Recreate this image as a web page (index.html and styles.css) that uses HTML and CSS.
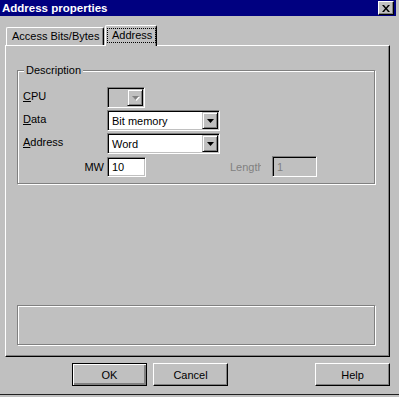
FILE: index.html
```html
<!DOCTYPE html>
<html lang="en">
<head>
    <meta charset="UTF-8">
    <title>Address properties</title>
    <link rel="stylesheet" href="styles.css">
</head>
<body>
    <div class="window">
        <div class="titlebar">
            <span class="title">Address properties</span>
            <button class="close">
                <svg width="8" height="7" viewBox="0 0 8 7"><path d="M0 0h2l2 2.5L6 0h2L5 3.5 8 7H6L4 4.5 2 7H0l3-3.5z"/></svg>
            </button>
        </div>

        <div class="tabs">
            <div class="tab">Access Bits/Bytes</div>
            <div class="tab active"><span class="focus">Address</span></div>
        </div>

        <div class="panel">
            <div class="group">
                <span class="group-title">Description</span>

                <div class="row first">
                    <span class="label"><u>C</u>PU</span>
                    <div class="combo disabled cpu">
                        <span class="value"></span>
                        <span class="drop"><svg width="7" height="4" viewBox="0 0 7 4"><path d="M0 0h7L3.5 4z"/></svg></span>
                    </div>
                </div>

                <div class="row">
                    <span class="label"><u>D</u>ata</span>
                    <div class="combo">
                        <span class="value">Bit memory</span>
                        <span class="drop"><svg width="7" height="4" viewBox="0 0 7 4"><path d="M0 0h7L3.5 4z"/></svg></span>
                    </div>
                </div>

                <div class="row">
                    <span class="label"><u>A</u>ddress</span>
                    <div class="combo">
                        <span class="value">Word</span>
                        <span class="drop"><svg width="7" height="4" viewBox="0 0 7 4"><path d="M0 0h7L3.5 4z"/></svg></span>
                    </div>
                </div>

                <div class="row">
                    <span class="label right">MW</span>
                    <div class="edit mw">10</div>
                    <span class="label-len">Length</span>
                    <div class="edit disabled len">1</div>
                </div>
            </div>

            <div class="group status"></div>
        </div>

        <div class="buttons">
            <button class="button default">OK</button>
            <button class="button">Cancel</button>
            <button class="button help">Help</button>
        </div>
    </div>
</body>
</html>
```

FILE: styles.css
```css
body {
    margin: 0;
    font-family: "Liberation Sans", Arial, sans-serif;
    font-size: 11px;
    color: #000;
    background: #c0c0c0;
}

.window {
    width: 399px;
    height: 395px;
    box-sizing: border-box;
    background: #c0c0c0;
    border-bottom: 1px solid #202020;
    overflow: hidden;
}

.titlebar {
    height: 16px;
    margin-right: 3px;
    background: #000080;
    color: #fff;
    display: flex;
    align-items: center;
    justify-content: space-between;
    padding: 0 2px 0 2px;
}

.title {
    font-weight: bold;
    font-size: 11.5px;
}

.close {
    width: 16px;
    height: 14px;
    padding: 0;
    margin: 0;
    background: #c0c0c0;
    border: 1px solid;
    border-color: #fff #000 #000 #fff;
    box-shadow: inset -1px -1px 0 #808080;
    display: flex;
    align-items: center;
    justify-content: center;
}

/* tabs */
.tabs {
    display: flex;
    align-items: flex-end;
    height: 20px;
    margin-top: 9px;
    padding-left: 6px;
    position: relative;
    z-index: 1;
}

.tab {
    height: 18px;
    box-sizing: border-box;
    width: 98px;
    border-top: 1px solid #fff;
    border-left: 1px solid #fff;
    border-right: 1px solid #000;
    border-radius: 2px 2px 0 0;
    box-shadow: inset -1px 0 0 #808080;
    background: #c0c0c0;
    display: flex;
    align-items: center;
    padding-left: 5px;
    line-height: 13px;
}

.tab.active {
    width: 52px;
    height: 21px;
    margin-left: 1px;
    margin-bottom: -1px;
    padding: 0 0 2px 2px;
}

.focus {
    outline: 1px dotted #000;
    padding: 0 3px 0 4px;
}

/* panel */
.panel {
    width: 385px;
    height: 312px;
    box-sizing: border-box;
    margin-left: 5px;
    border: 1px solid;
    border-color: #fff #000 #000 #fff;
    box-shadow: inset -1px -1px 0 #808080;
    padding: 24px 0 0 11px;
}

.group {
    width: 358px;
    height: 114px;
    box-sizing: border-box;
    border: 1px solid #808080;
    box-shadow: 1px 1px 0 #fff, inset 1px 1px 0 #fff;
    display: flex;
    flex-direction: column;
    padding: 0 5px;
}

.group-title {
    align-self: flex-start;
    margin: -7px 0 0 1px;
    padding: 0 2px;
    background: #c0c0c0;
    line-height: 13px;
}

.group.status {
    height: 40px;
    margin-top: 121px;
}

.row {
    display: flex;
    align-items: center;
    height: 21px;
    margin-top: 2px;
}

.row.first {
    margin-top: 10px;
}

.label {
    width: 84px;
    margin-bottom: 3px;
}

.label.right {
    width: 81px;
    padding-right: 3px;
    margin-bottom: 0;
    text-align: right;
}

/* combo boxes and edits */
.combo, .edit {
    box-sizing: border-box;
    height: 21px;
    border: 1px solid;
    border-color: #808080 #fff #fff #808080;
    box-shadow: inset 1px 1px 0 #000, inset -1px -1px 0 #c0c0c0;
    background: #fff;
    padding: 1px;
    display: flex;
    align-items: center;
}

.combo {
    width: 113px;
}

.combo.cpu {
    width: 38px;
}

.combo.disabled, .edit.disabled {
    background: #c0c0c0;
    color: #808080;
}

.value {
    flex: 1;
    padding-left: 3px;
}

.drop {
    width: 16px;
    height: 17px;
    box-sizing: border-box;
    border: 1px solid;
    border-color: #c0c0c0 #000 #000 #c0c0c0;
    box-shadow: inset 1px 1px 0 #fff, inset -1px -1px 0 #808080;
    background: #c0c0c0;
    display: flex;
    align-items: center;
    justify-content: center;
}

.disabled .drop svg {
    fill: #808080;
    filter: drop-shadow(1px 1px 0 #fff);
}

.edit {
    padding-left: 4px;
}

.edit.mw {
    width: 39px;
    height: 20px;
}

.label-len {
    width: 31px;
    margin-left: 84px;
    overflow: hidden;
    white-space: nowrap;
    color: #808080;
}

.edit.len {
    width: 45px;
    margin-left: 11px;
}

/* buttons */
.buttons {
    display: flex;
    margin-top: 6px;
    padding-left: 72px;
}

.button {
    width: 75px;
    height: 23px;
    margin: 0 6px 0 0;
    padding: 0;
    font-family: "Liberation Sans", Arial, sans-serif;
    font-size: 11px;
    color: #000;
    background: #c0c0c0;
    border: 1px solid;
    border-color: #fff #000 #000 #fff;
    box-shadow: inset -1px -1px 0 #808080;
}

.button.default {
    border-color: #000;
    box-shadow: inset 1px 1px 0 #fff, inset -2px -2px 0 #808080;
}

.button.help {
    margin-left: auto;
    margin-right: 9px;
}
```
